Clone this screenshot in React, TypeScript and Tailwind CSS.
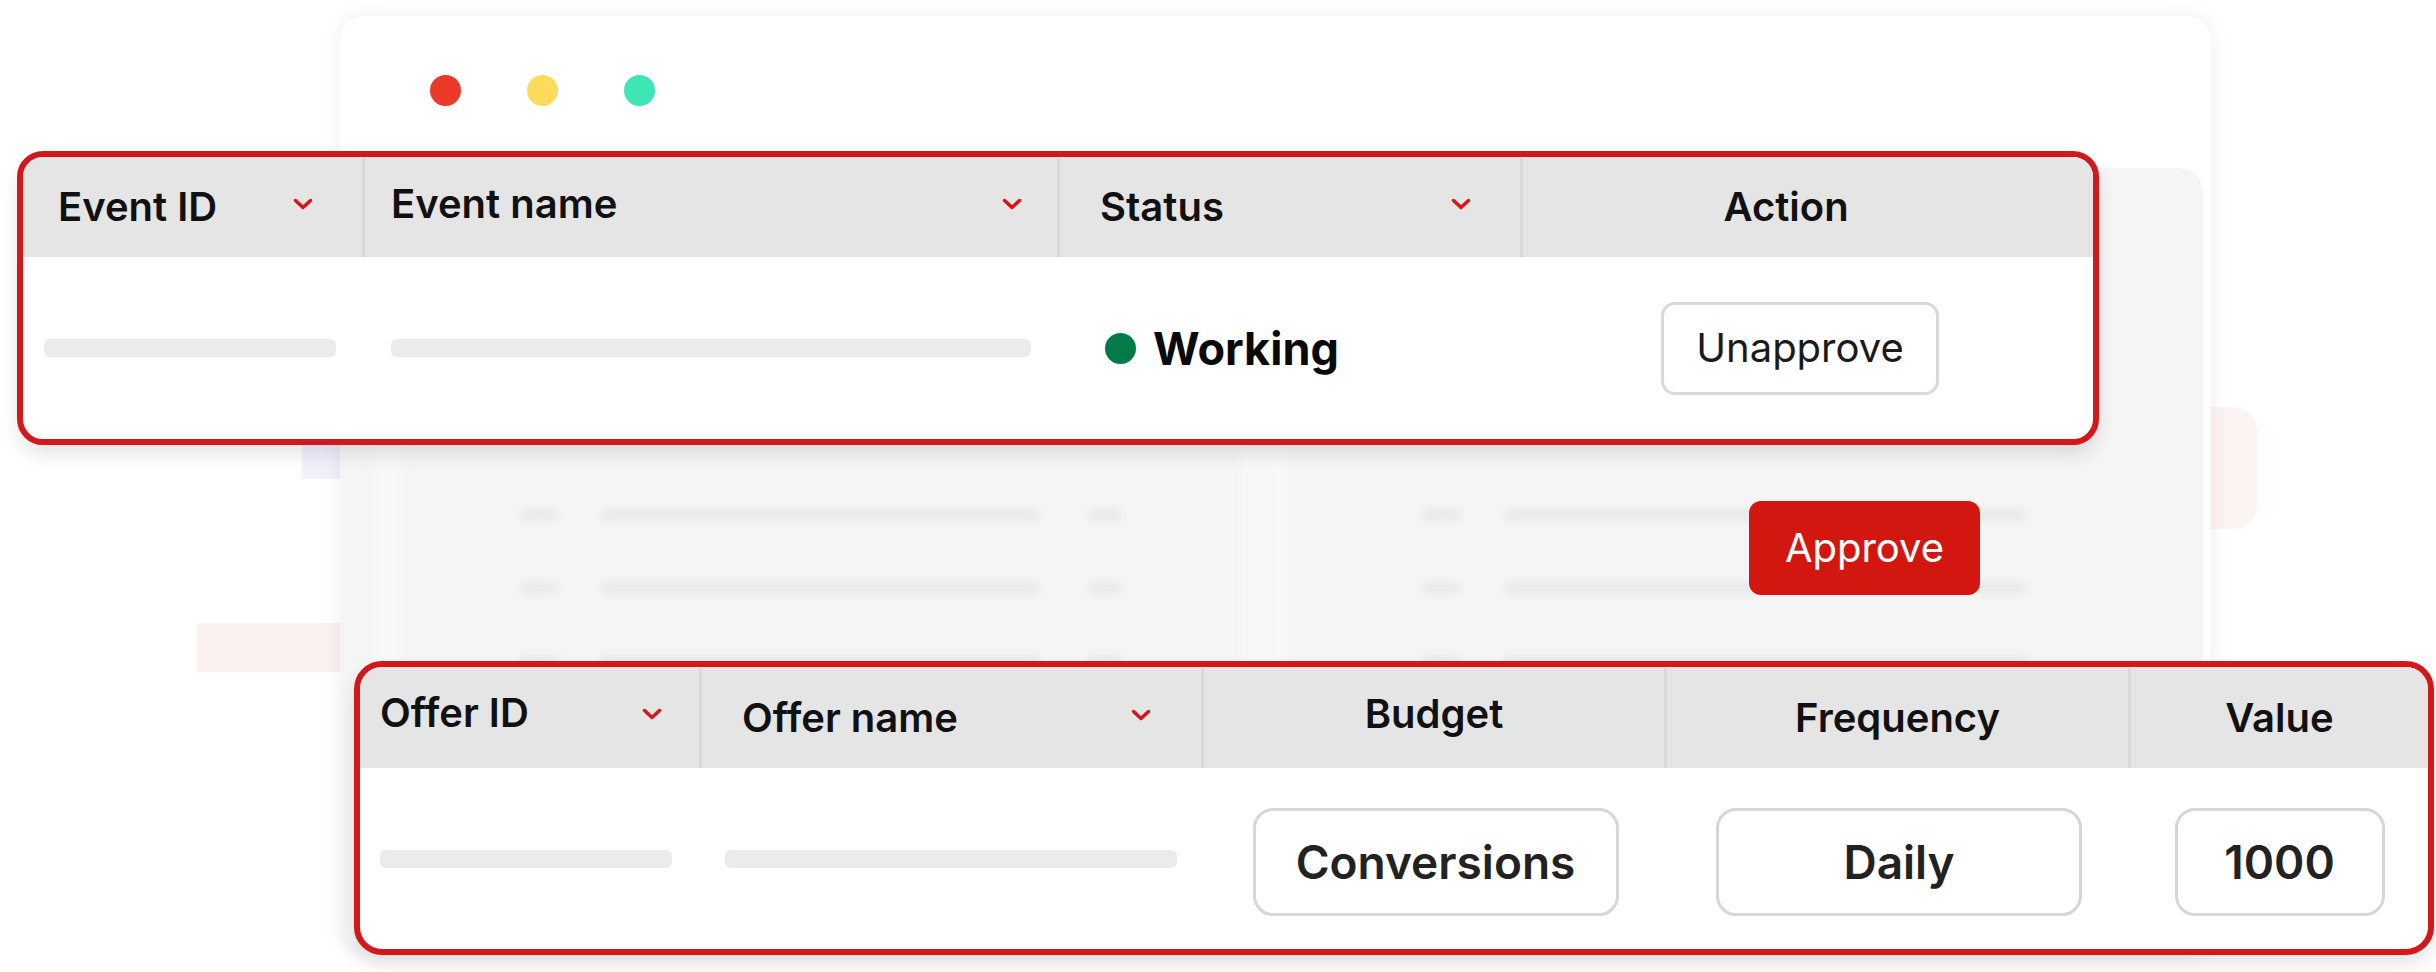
import React from 'react'

const Chevron = ({ className = '' }: { className?: string }) => (
  <svg
    className={className}
    width="20"
    height="12"
    viewBox="0 0 20 12"
    fill="none"
  >
    <path
      d="M2.5 2.5L10 9.5L17.5 2.5"
      stroke="#D5161A"
      strokeWidth="3.5"
      strokeLinecap="round"
      strokeLinejoin="round"
    />
  </svg>
)

const Skeleton = ({ className = '' }: { className?: string }) => (
  <div className={`h-[18px] rounded-[6px] bg-[#EBEBEB] ${className}`} />
)

function EventTable() {
  return (
    <div className="absolute left-[17px] top-[151px] z-20 w-[2082px] h-[294px] overflow-hidden rounded-[26px] border-[6px] border-[#D4171A] bg-white shadow-[0_10px_18px_rgba(0,0,0,0.10)]">
      <div className="flex h-[100px] bg-[#E5E5E5] text-[40px] font-semibold text-[#111]">
        <div className="flex w-[342px] items-center justify-between border-r-[3px] border-[#D9D9D9] pl-[35px] pr-[49px]">
          <span className="leading-none">Event ID</span>
          <Chevron className="-mt-[6px]" />
        </div>
        <div className="flex w-[695px] items-center justify-between border-r-[3px] border-[#D9D9D9] pl-[26px] pr-[35px]">
          <span className="-mt-[6px] leading-none">Event name</span>
          <Chevron className="-mt-[6px]" />
        </div>
        <div className="flex w-[463px] items-center justify-between border-r-[3px] border-[#D9D9D9] pl-[40px] pr-[49px]">
          <span className="leading-none">Status</span>
          <Chevron className="-mt-[6px]" />
        </div>
        <div className="flex w-[570px] items-center justify-center pr-[44px]">
          <span className="leading-none">Action</span>
        </div>
      </div>
      <div className="flex h-[182px] items-center">
        <div className="w-[342px] pl-[21px]">
          <Skeleton className="w-[292px]" />
        </div>
        <div className="w-[695px] pl-[26px]">
          <Skeleton className="w-[640px]" />
        </div>
        <div className="flex w-[463px] items-center gap-[17px] pl-[45px]">
          <span className="size-[31px] rounded-full bg-[#047A4B]" />
          <span className="text-[45px] font-bold leading-none text-[#0A0A0A]">
            Working
          </span>
        </div>
        <div className="w-[570px] pl-[138px]">
          <button className="flex h-[93px] w-[278px] items-center justify-center rounded-[14px] border-[3px] border-[#D9D9D9] bg-white text-[40px] leading-none text-[#1A1A1A]">
            Unapprove
          </button>
        </div>
      </div>
    </div>
  )
}

function OfferTable() {
  return (
    <div className="absolute left-[354px] top-[661px] z-20 w-[2080px] h-[294px] overflow-hidden rounded-[28px] border-[6px] border-[#D4171A] bg-white shadow-[0_10px_18px_rgba(0,0,0,0.10)]">
      <div className="flex h-[101px] bg-[#E5E5E5] text-[40px] font-semibold text-[#111]">
        <div className="flex w-[342px] items-center justify-between border-r-[3px] border-[#D9D9D9] pl-[20px] pr-[37px]">
          <span className="-mt-[10px] leading-none">Offer ID</span>
          <Chevron className="-mt-[8px]" />
        </div>
        <div className="flex w-[502px] items-center justify-between border-r-[3px] border-[#D9D9D9] pl-[40px] pr-[50px]">
          <span className="leading-none">Offer name</span>
          <Chevron className="-mt-[6px]" />
        </div>
        <div className="flex w-[463px] items-center justify-center border-r-[3px] border-[#D9D9D9]">
          <span className="-mt-[8px] leading-none">Budget</span>
        </div>
        <div className="flex w-[464px] items-center justify-center border-r-[3px] border-[#D9D9D9]">
          <span className="leading-none">Frequency</span>
        </div>
        <div className="flex w-[297px] items-center justify-center">
          <span className="leading-none">Value</span>
        </div>
      </div>
      <div className="flex h-[181px] items-center">
        <div className="w-[342px] pl-[20px]">
          <Skeleton className="w-[292px]" />
        </div>
        <div className="w-[502px] pl-[23px]">
          <Skeleton className="w-[452px]" />
        </div>
        {[
          { label: 'Conversions', w: 'w-[463px]', box: 'w-[366px]' },
          { label: 'Daily', w: 'w-[464px]', box: 'w-[366px]' },
          { label: '1000', w: 'w-[297px]', box: 'w-[210px]' },
        ].map((c) => (
          <div key={c.label} className={`${c.w} flex justify-center pt-[6px]`}>
            <div
              className={`${c.box} flex h-[108px] items-center justify-center rounded-[20px] border-[3px] border-[#D6D6D6] text-[46px] font-semibold leading-none text-[#222]`}
            >
              {c.label}
            </div>
          </div>
        ))}
      </div>
    </div>
  )
}

function BlurredRow() {
  return (
    <div className="flex h-[12px] items-center">
      <div className="ml-[180px] h-[12px] w-[38px] rounded-full bg-[#EAEAEA]" />
      <div className="ml-[43px] h-[12px] w-[439px] rounded-full bg-[#EAEAEA]" />
      <div className="ml-[48px] h-[12px] w-[34px] rounded-full bg-[#EAEAEA]" />
      <div className="ml-[300px] h-[12px] w-[38px] rounded-full bg-[#EAEAEA]" />
      <div className="ml-[44px] h-[12px] w-[523px] rounded-full bg-[#EAEAEA]" />
    </div>
  )
}

export default function App() {
  return (
    <div className="relative h-[972px] w-[2436px] overflow-hidden bg-white font-['Inter',sans-serif]">
      {/* soft decorations behind the window */}
      <div className="absolute left-[302px] top-[445px] h-[34px] w-[60px] bg-[#F1F0FC]" />
      <div className="absolute left-[198px] top-[623px] h-[49px] w-[160px] bg-[#FBF1F1]" />
      <div className="absolute left-[2180px] top-[407px] h-[122px] w-[77px] rounded-r-[24px] bg-[#FCF3F3]" />

      {/* app window */}
      <div className="absolute left-[340px] top-[16px] z-10 flex h-[937px] w-[1871px] flex-col overflow-hidden rounded-[24px] bg-white shadow-[0_0_20px_rgba(0,0,0,0.07)]">
        <div className="flex h-[152px] shrink-0 gap-[66px] pl-[90px] pt-[59px]">
          <span className="size-[31px] rounded-full bg-[#E93A2A]" />
          <span className="size-[31px] rounded-full bg-[#FFDB5C]" />
          <span className="size-[31px] rounded-full bg-[#3EE6B5]" />
        </div>
        <div className="relative mr-[8px] flex flex-1 flex-col gap-[61px] rounded-tr-[24px] bg-[#F5F5F5] pt-[341px]">
          <div className="absolute inset-y-0 left-[34px] w-[28px] bg-[#F8F8F8] blur-[5px]" />
          <div className="absolute inset-y-0 left-[900px] w-[46px] bg-[#F8F8F8] blur-[5px]" />
          <div className="relative blur-[3px]">
            <BlurredRow />
          </div>
          <div className="relative blur-[3px]">
            <BlurredRow />
          </div>
          <div className="relative blur-[3px]">
            <BlurredRow />
          </div>
        </div>
      </div>

      <button className="absolute left-[1749px] top-[501px] z-10 flex h-[94px] w-[231px] items-center justify-center rounded-[12px] bg-[#D21711] text-[40px] leading-none text-white">
        Approve
      </button>

      <EventTable />
      <OfferTable />
    </div>
  )
}
